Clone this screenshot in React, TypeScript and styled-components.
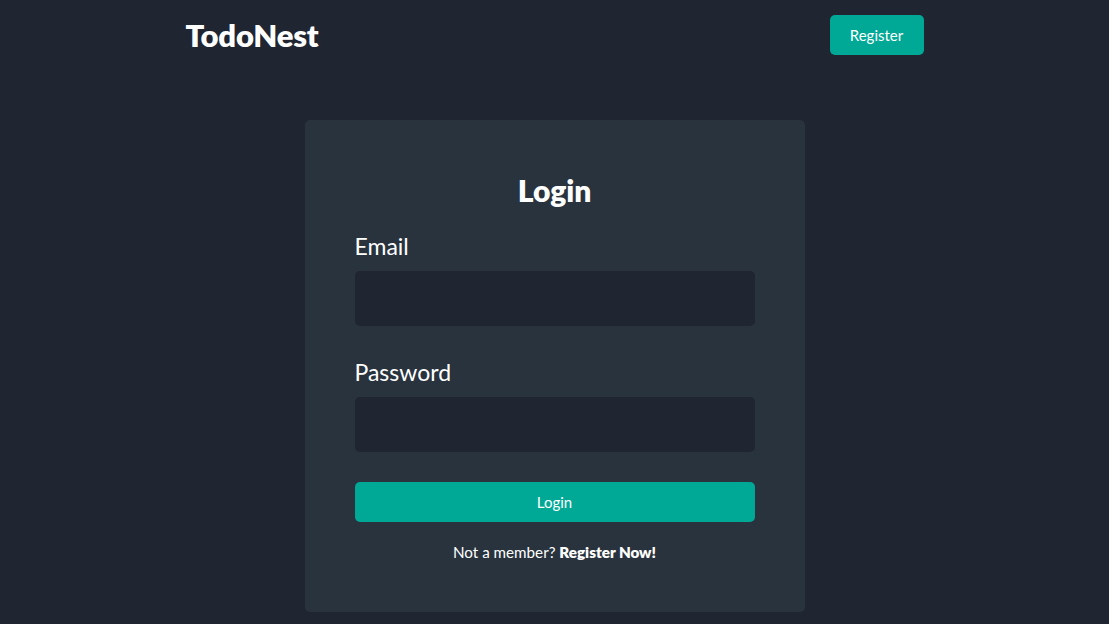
import React from "react";
import styled, { createGlobalStyle } from "styled-components";

const Global = createGlobalStyle`
  html, body { margin: 0; padding: 0; background: #1f2531; }
  body { font-family: Lato, "Noto Sans", sans-serif; color: #ffffff; }
  * { box-sizing: border-box; }
`;

const Page = styled.div`
  min-height: 624px;
  background: #1f2531;
`;

const Header = styled.header`
  width: 738px;
  margin: 0 auto;
  height: 70px;
  display: flex;
  align-items: center;
  justify-content: space-between;
`;

const Logo = styled.h1`
  margin: 0;
  font-size: 31px;
  font-weight: 800;
  letter-spacing: -0.2px;
`;

const Button = styled.button<{ $full?: boolean }>`
  border: none;
  background: #00a896;
  color: #ffffff;
  font-family: inherit;
  font-size: 15px;
  height: 40px;
  border-radius: 5px;
  cursor: pointer;
  width: ${(p) => (p.$full ? "100%" : "94px")};
`;

const Card = styled.main`
  width: 500px;
  margin: 50px auto 0;
  background: #29333e;
  border-radius: 5px;
  padding: 50px 50px 50px;
  display: flex;
  flex-direction: column;
`;

const Title = styled.h2`
  margin: 0 0 21px;
  text-align: center;
  font-size: 30px;
  font-weight: 800;
  line-height: 40px;
`;

const Field = styled.div<{ $gap: number }>`
  display: flex;
  flex-direction: column;
  margin-bottom: ${(p) => p.$gap}px;
`;

const Label = styled.label`
  font-size: 23px;
  line-height: 30px;
  margin-bottom: 10px;
`;

const Input = styled.input`
  height: 55px;
  border: none;
  border-radius: 5px;
  background: #1f2531;
  color: #fff;
  padding: 0 15px;
  font-size: 16px;
  outline: none;
`;

const Footer = styled.p`
  margin: 20px 0 0;
  text-align: center;
  font-size: 15.2px;
  line-height: 20px;
  b { font-weight: 800; }
`;

export default function App() {
  return (
    <Page>
      <Global />
      <Header>
        <Logo>TodoNest</Logo>
        <Button>Register</Button>
      </Header>
      <Card>
        <Title>Login</Title>
        <Field $gap={31}>
          <Label>Email</Label>
          <Input type="email" />
        </Field>
        <Field $gap={30}>
          <Label>Password</Label>
          <Input type="password" />
        </Field>
        <Button $full>Login</Button>
        <Footer>
          Not a member? <b>Register Now!</b>
        </Footer>
      </Card>
    </Page>
  );
}
